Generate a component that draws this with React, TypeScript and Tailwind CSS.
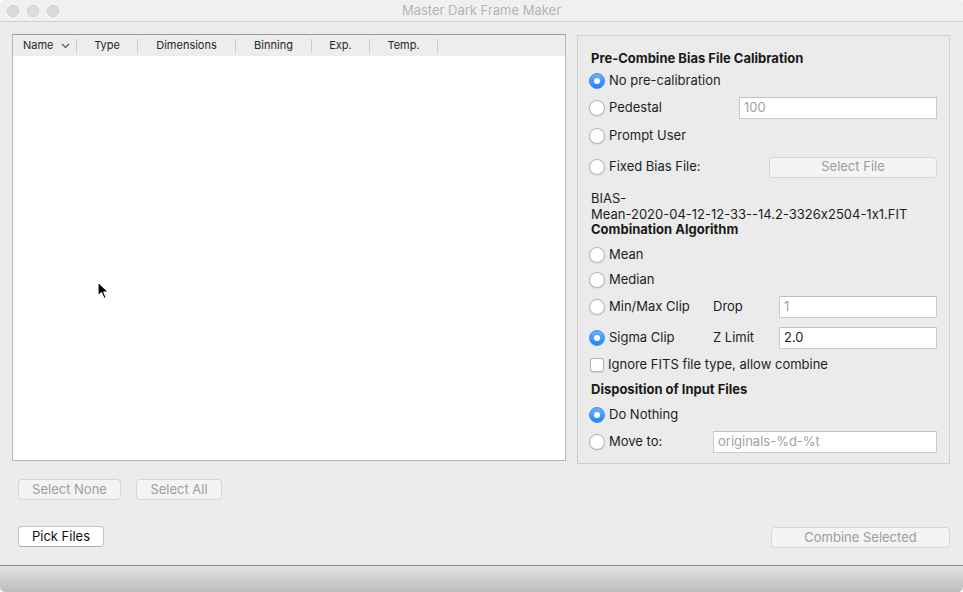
import React from "react";

function Radio({ checked }: { checked?: boolean }) {
  if (checked) {
    return (
      <div className="w-[16px] h-[16px] rounded-full bg-gradient-to-b from-[#69b1fa] to-[#1b84fb] border border-[#3a8ef0] flex items-center justify-center shrink-0">
        <div className="w-[6px] h-[6px] rounded-full bg-white" />
      </div>
    );
  }
  return (
    <div className="w-[16px] h-[16px] rounded-full bg-white border border-[#b4b4b4] shadow-[0_0.5px_1px_rgba(0,0,0,0.15)] shrink-0" />
  );
}

function RadioLabel({ checked, label }: { checked?: boolean; label: string }) {
  return (
    <div className="flex items-center">
      <Radio checked={checked} />
      <span className="ml-[4px] text-[13px] text-[#1e1e1e] whitespace-nowrap">{label}</span>
    </div>
  );
}

function Field({ value, dim, className }: { value: string; dim?: boolean; className?: string }) {
  return (
    <div
      className={
        "h-[22px] bg-white border border-[#cbcbcb] border-t-[#c0c0c0] flex items-center px-[4px] text-[13px] " +
        (dim ? "text-[#a2a2a2] " : "text-[#1e1e1e] ") +
        (className || "")
      }
    >
      {value}
    </div>
  );
}

function DisabledButton({ label, className }: { label: string; className?: string }) {
  return (
    <div
      className={
        "h-[21px] rounded-[4px] bg-[#f4f4f4] border border-[#d6d6d6] flex items-center justify-center text-[13px] text-[#9c9c9c] " +
        (className || "")
      }
    >
      {label}
    </div>
  );
}

function Heading({ children, className }: { children: React.ReactNode; className?: string }) {
  return (
    <div className={"ml-[2px] text-[13px] font-bold text-[#1a1a1a] leading-none flex items-center " + (className || "")}>
      {children}
    </div>
  );
}

export default function App() {
  const cols = [
    { label: "Type", w: 61 },
    { label: "Dimensions", w: 98 },
    { label: "Binning", w: 76 },
    { label: "Exp.", w: 58 },
    { label: "Temp.", w: 68 },
  ];
  return (
    <div className="w-[963px] h-[592px] bg-white font-[Inter,sans-serif] [font-feature-settings:'calt'_0]">
      <div className="relative w-[963px] h-[592px] bg-[#ececec] flex flex-col overflow-hidden rounded-[5px]">
        {/* Title bar */}
        <div className="relative h-[22px] shrink-0 bg-[#f0f0f0] border-b border-[#d0d0d0] flex items-center justify-center">
          <div className="absolute left-[7px] top-[5px] flex gap-[8px]">
            <div className="w-[12px] h-[12px] rounded-full bg-[#dcdcdc] border border-[#cbcbcb]" />
            <div className="w-[12px] h-[12px] rounded-full bg-[#dcdcdc] border border-[#cbcbcb]" />
            <div className="w-[12px] h-[12px] rounded-full bg-[#dcdcdc] border border-[#cbcbcb]" />
          </div>
          <span className="text-[13px] text-[#b4b4b4]">Master Dark Frame Maker</span>
        </div>

        {/* Main */}
        <div className="flex flex-1 min-h-0">
          {/* Left column */}
          <div className="pl-[12px] pt-[12px] flex flex-col">
            <div className="w-[554px] h-[427px] border border-[#b5b5b5] border-t-[#9a9a9a] flex flex-col bg-white">
              <div className="h-[21px] bg-[#ededed] flex items-center text-[11px] text-[#262626] shrink-0">
                <div className="w-[64px] h-[14px] flex items-center pl-[10px] pr-[6px] border-r border-[#cacaca]">
                  <span>Name</span>
                  <svg className="ml-auto" width="9" height="6" viewBox="0 0 9 6">
                    <path d="M1 1 L4.5 4.5 L8 1" fill="none" stroke="#555" strokeWidth="1.2" />
                  </svg>
                </div>
                {cols.map((c) => (
                  <div
                    key={c.label}
                    style={{ width: c.w }}
                    className="h-[14px] flex items-center justify-center border-r border-[#cacaca]"
                  >
                    {c.label}
                  </div>
                ))}
              </div>
              <div className="flex-1 bg-white" />
            </div>
            <div className="mt-[18px] ml-[6px] flex gap-[15px]">
              <DisabledButton label="Select None" className="w-[103px]" />
              <DisabledButton label="Select All" className="w-[86px]" />
            </div>
            <div className="mt-[26px] ml-[6px]">
              <div className="w-[86px] h-[21px] rounded-[4px] bg-white border border-[#c4c4c4] border-b-[#adadad] flex items-center justify-center text-[13px] text-[#111]">
                Pick Files
              </div>
            </div>
          </div>

          {/* Right column */}
          <div className="ml-[11px] pt-[13px] flex flex-col">
            <div className="w-[373px] h-[429px] border border-[#cfcfcf] bg-[#ebebeb] pl-[11px] pr-[12px] pt-[13px] flex flex-col">
              <Heading className="h-[18px]">Pre-Combine Bias File Calibration</Heading>
              <div className="mt-[4px] h-[20px] flex items-center">
                <RadioLabel checked label="No pre-calibration" />
              </div>
              <div className="mt-[6px] h-[22px] flex items-center">
                <RadioLabel label="Pedestal" />
                <Field value="100" dim className="ml-auto w-[198px]" />
              </div>
              <div className="mt-[7px] h-[20px] flex items-center">
                <RadioLabel label="Prompt User" />
              </div>
              <div className="mt-[10px] h-[22px] flex items-center">
                <RadioLabel label="Fixed Bias File:" />
                <DisabledButton label="Select File" className="ml-auto w-[168px]" />
              </div>
              <div className="mt-[12px] ml-[2px] text-[13px] leading-[16px] text-[#1e1e1e]">
                <div>BIAS-</div>
                <div>Mean-2020-04-12-12-33--14.2-3326x2504-1x1.FIT</div>
              </div>
              <Heading className="h-[15px]">Combination Algorithm</Heading>
              <div className="mt-[8px] h-[20px] flex items-center">
                <RadioLabel label="Mean" />
              </div>
              <div className="mt-[5px] h-[20px] flex items-center">
                <RadioLabel label="Median" />
              </div>
              <div className="mt-[6px] h-[22px] flex items-center">
                <div className="w-[124px]">
                  <RadioLabel label="Min/Max Clip" />
                </div>
                <span className="text-[13px] text-[#1e1e1e]">Drop</span>
                <Field value="1" dim className="ml-auto w-[158px]" />
              </div>
              <div className="mt-[9px] h-[22px] flex items-center">
                <div className="w-[124px]">
                  <RadioLabel checked label="Sigma Clip" />
                </div>
                <span className="text-[13px] text-[#1e1e1e]">Z Limit</span>
                <Field value="2.0" className="ml-auto w-[158px]" />
              </div>
              <div className="mt-[6px] h-[20px] flex items-center">
                <div className="ml-[1px] w-[14px] h-[14px] rounded-[3px] bg-white border border-[#b4b4b4] shadow-[0_0.5px_1px_rgba(0,0,0,0.12)]" />
                <span className="ml-[4px] text-[13px] text-[#1e1e1e]">Ignore FITS file type, allow combine</span>
              </div>
              <Heading className="mt-[5px] h-[18px]">Disposition of Input Files</Heading>
              <div className="mt-[7px] h-[20px] flex items-center">
                <RadioLabel checked label="Do Nothing" />
              </div>
              <div className="mt-[6px] h-[22px] flex items-center">
                <div className="w-[124px]">
                  <RadioLabel label="Move to:" />
                </div>
                <Field value="originals-%d-%t" dim className="flex-1" />
              </div>
            </div>
            <div className="mt-[63px] flex justify-end">
              <DisabledButton label="Combine Selected" className="w-[179px]" />
            </div>
          </div>
        </div>

        {/* Bottom bar */}
        <div className="h-[27px] shrink-0 border-t border-[#8a8a8a] bg-gradient-to-b from-[#e4e4e4] to-[#bcbcbc]" />

        {/* Mouse cursor */}
        <svg className="absolute left-[97px] top-[281px]" width="14" height="20" viewBox="0 0 14 20">
          <path d="M1 1 L1 15 L4.5 11.8 L7 17.5 L9.2 16.5 L6.8 11 L11.5 11 Z" fill="#000" stroke="#fff" strokeWidth="1.2" strokeLinejoin="round" />
        </svg>
      </div>
    </div>
  );
}
